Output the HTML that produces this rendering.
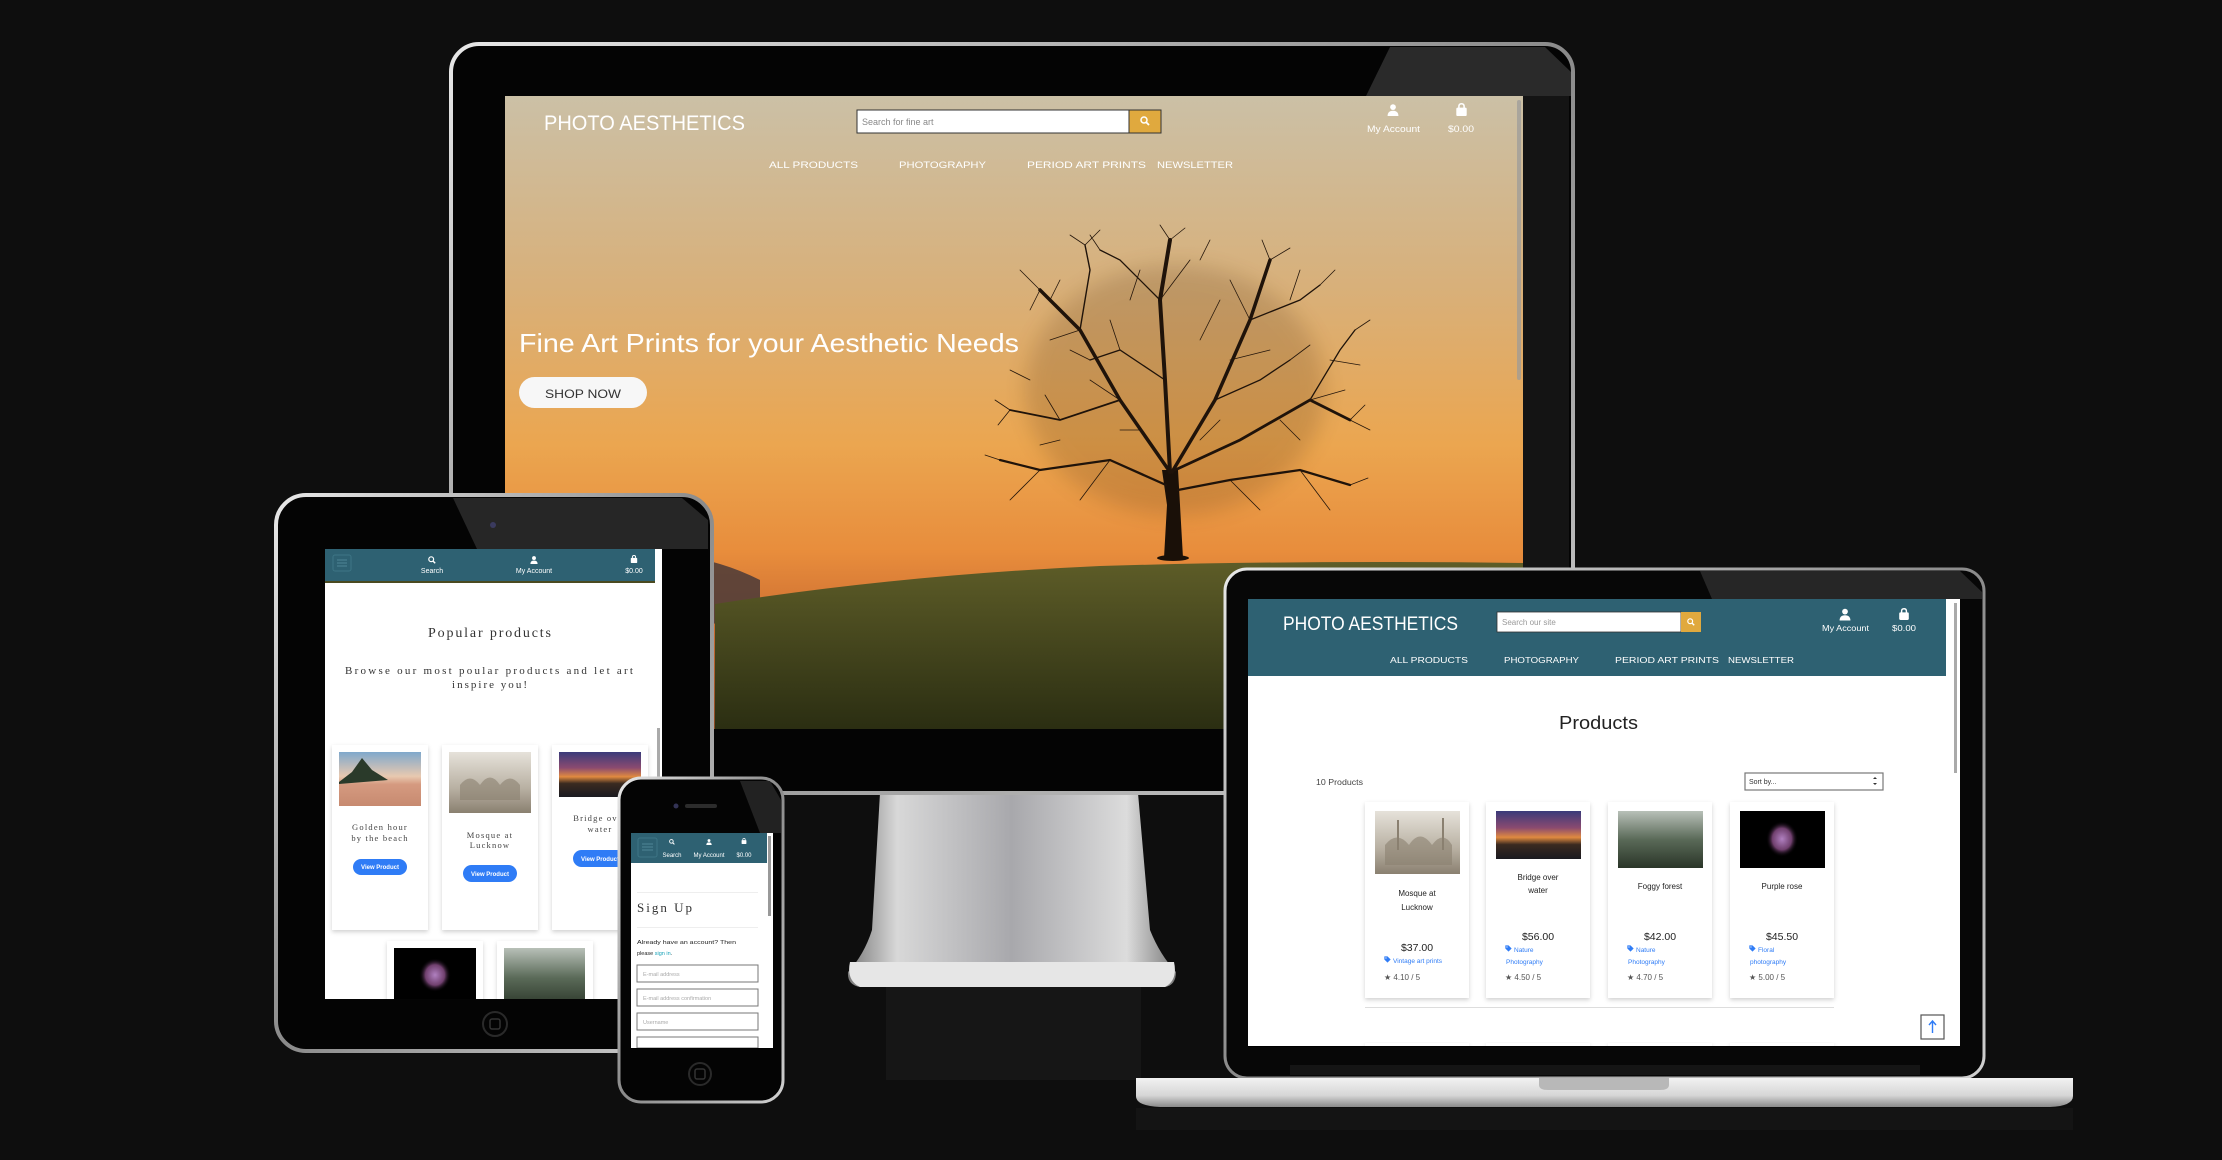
<!DOCTYPE html>
<html><head><meta charset="utf-8"><style>html,body{margin:0;padding:0;background:#0e0e0e;overflow:hidden}svg{display:block}</style></head>
<body>
<svg width="2222" height="1160" viewBox="0 0 2222 1160" xmlns="http://www.w3.org/2000/svg" font-family="Liberation Sans, sans-serif">
<defs>
<linearGradient id="sky" x1="0" y1="96" x2="0" y2="729" gradientUnits="userSpaceOnUse">
<stop offset="0" stop-color="#cbc0a6"/><stop offset="0.3" stop-color="#d8b07a"/><stop offset="0.55" stop-color="#eba650"/><stop offset="0.72" stop-color="#e88d3c"/><stop offset="0.85" stop-color="#c96a30"/><stop offset="1" stop-color="#8a4a25"/></linearGradient>
<linearGradient id="hill" x1="0" y1="560" x2="0" y2="729" gradientUnits="userSpaceOnUse"><stop offset="0" stop-color="#5e5d28"/><stop offset="1" stop-color="#2b2e12"/></linearGradient>
<linearGradient id="rim" x1="0" y1="0" x2="1" y2="1"><stop offset="0" stop-color="#e8e8e8"/><stop offset="0.5" stop-color="#8a8a8a"/><stop offset="1" stop-color="#d0d0d0"/></linearGradient>
<linearGradient id="stand" x1="0" y1="0" x2="1" y2="0"><stop offset="0" stop-color="#7a7a7a"/><stop offset="0.15" stop-color="#d8d8d8"/><stop offset="0.5" stop-color="#a8a8ac"/><stop offset="0.85" stop-color="#dcdcdc"/><stop offset="1" stop-color="#7a7a7a"/></linearGradient>
<linearGradient id="base" x1="0" y1="0" x2="0" y2="1"><stop offset="0" stop-color="#f2f2f2"/><stop offset="0.6" stop-color="#d6d6d6"/><stop offset="1" stop-color="#8a8a8a"/></linearGradient>
<linearGradient id="beach" x1="0" y1="0" x2="0" y2="1"><stop offset="0" stop-color="#7fa8cc"/><stop offset="0.45" stop-color="#e8c9b0"/><stop offset="0.6" stop-color="#d59a80"/><stop offset="1" stop-color="#c78a70"/></linearGradient>
<linearGradient id="bridge" x1="0" y1="0" x2="0" y2="1"><stop offset="0" stop-color="#3a3a7a"/><stop offset="0.35" stop-color="#8a4a70"/><stop offset="0.55" stop-color="#e08a40"/><stop offset="0.7" stop-color="#3a2a20"/><stop offset="1" stop-color="#1a1a20"/></linearGradient>
<linearGradient id="forest" x1="0" y1="0" x2="0" y2="1"><stop offset="0" stop-color="#b8c0b8"/><stop offset="0.5" stop-color="#5a6a58"/><stop offset="1" stop-color="#2a3528"/></linearGradient>
<linearGradient id="mosque" x1="0" y1="0" x2="0" y2="1"><stop offset="0" stop-color="#e6e2da"/><stop offset="0.6" stop-color="#b8b0a2"/><stop offset="1" stop-color="#8a8070"/></linearGradient>
<radialGradient id="rose" cx="0.5" cy="0.5" r="0.5"><stop offset="0" stop-color="#b080c0"/><stop offset="0.6" stop-color="#70406e"/><stop offset="1" stop-color="#000" stop-opacity="0"/></radialGradient>
<filter id="blur"><feGaussianBlur stdDeviation="10"/></filter>
<filter id="sh" x="-20%" y="-20%" width="140%" height="140%"><feDropShadow dx="0" dy="2" stdDeviation="2" flood-color="#000" flood-opacity="0.18"/></filter>
<clipPath id="tabclip"><rect x="325" y="549" width="337" height="450"/></clipPath>
<symbol id="mag" viewBox="0 0 10 10"><circle cx="4" cy="4" r="3" fill="none" stroke="#fff" stroke-width="1.5"/><line x1="6.2" y1="6.2" x2="9" y2="9" stroke="#fff" stroke-width="1.8"/></symbol>
<symbol id="user" viewBox="0 0 10 10"><circle cx="5" cy="2.6" r="2.4" fill="#fff"/><path d="M0.5 10 Q0.5 5.6 5 5.6 Q9.5 5.6 9.5 10 Z" fill="#fff"/></symbol>
<symbol id="bag" viewBox="0 0 10 10"><path d="M3 4 V2.6 Q3 0.6 5 0.6 Q7 0.6 7 2.6 V4" fill="none" stroke="#fff" stroke-width="1.2"/><rect x="1" y="3.6" width="8" height="6.4" rx="1" fill="#fff"/></symbol>
<symbol id="tag" viewBox="0 0 10 10"><path d="M0.5 0.5 H5 L9.5 5 L5 9.5 L0.5 5 Z" fill="#2f7cf6"/><circle cx="2.8" cy="2.8" r="0.9" fill="#fff"/></symbol>
</defs>

<rect width="2222" height="1160" fill="#0e0e0e"/>

<!-- ============ MONITOR ============ -->
<rect x="886" y="985" width="255" height="95" fill="#161616"/>
<path d="M880 793 L1138 793 L1150 930 Q1160 955 1176 972 Q1176 985 1165 987 L860 987 Q847 985 848 972 Q864 955 872 930 Z" fill="url(#stand)"/>
<path d="M850 962 L1174 962 Q1178 980 1165 987 L860 987 Q846 980 850 962 Z" fill="#e6e6e6"/>
<rect x="451" y="44" width="1122" height="749" rx="28" fill="#040404" stroke="url(#rim)" stroke-width="4"/>
<polygon points="1390,47 1545,47 1571,72 1571,96 1366,96" fill="#2a2a2a"/>
<rect x="1523" y="96" width="46" height="634" fill="#141414"/>
<rect x="505" y="96" width="1018" height="633" fill="url(#sky)"/>
<path d="M505 575 Q560 550 600 552 Q640 540 680 556 Q720 560 760 580 L760 620 L505 640 Z" fill="#4a3a38" opacity="0.85"/>
<path d="M715 604 Q900 575 1100 566 Q1300 560 1523 563 L1523 729 L715 729 Z" fill="url(#hill)"/>
<!-- tree -->
<ellipse cx="1175" cy="390" rx="150" ry="125" fill="#4a2a10" opacity="0.18" filter="url(#blur)"/>
<path d="M1164 558 L1167 505 L1162 470 L1178 470 L1180 505 L1183 558 Z" fill="#1a1008"/>
<ellipse cx="1173" cy="558" rx="16" ry="3" fill="#1a1008"/>
<g stroke="#1f130a" stroke-linecap="round" fill="none">
<path d="M1170 472 L1120 400 L1080 330 L1040 290" stroke-width="3.5"/>
<path d="M1120 400 L1060 420 L1010 410" stroke-width="1.8"/>
<path d="M1080 330 L1090 270 L1085 245" stroke-width="1.4"/>
<path d="M1170 472 L1165 380 L1160 300 L1170 240" stroke-width="4"/>
<path d="M1160 300 L1120 260 L1100 250" stroke-width="1.3"/>
<path d="M1172 472 L1215 400 L1250 320 L1270 260" stroke-width="3.5"/>
<path d="M1250 320 L1300 300 L1320 285" stroke-width="1.3"/>
<path d="M1175 470 L1240 440 L1310 400 L1350 420" stroke-width="2.8"/>
<path d="M1310 400 L1340 350 L1355 330" stroke-width="1.3"/>
<path d="M1166 485 L1110 460 L1040 470 L1000 460" stroke-width="2.3"/>
<path d="M1178 490 L1230 480 L1300 470 L1350 485" stroke-width="2.3"/>
<path d="M1165 380 L1120 350 L1090 360" stroke-width="1.3"/>
<path d="M1215 400 L1260 380 L1290 360" stroke-width="1.3"/>
</g>
<g stroke="#24160b" stroke-linecap="round" fill="none" stroke-width="0.8">
<path d="M1040 470 L1010 500 M1300 470 L1330 510 M1120 400 L1090 380 M1250 320 L1230 280 M1160 300 L1190 260 M1080 330 L1050 340 M1310 400 L1345 390 M1110 460 L1080 500 M1230 480 L1260 510"/>
<path d="M1040 290 L1020 270 M1040 290 L1030 310 M1085 245 L1070 235 M1085 245 L1100 230 M1170 240 L1160 225 M1170 240 L1185 228 M1100 250 L1090 235 M1270 260 L1262 240 M1270 260 L1290 248 M1320 285 L1335 270 M1355 330 L1370 320 M1350 420 L1370 430 M1350 420 L1365 405 M1010 410 L995 400 M1010 410 L998 425 M1000 460 L985 455 M1350 485 L1368 478 M1290 360 L1310 345 M1090 360 L1070 350"/>
<path d="M1060 420 L1045 395 M1120 350 L1110 320 M1130 300 L1140 270 M1200 340 L1220 300 M1230 360 L1270 350 M1280 420 L1300 440 M1060 440 L1040 445 M1140 430 L1120 430 M1200 440 L1220 420 M1330 360 L1360 365 M1030 380 L1010 370 M1290 300 L1300 270 M1200 260 L1210 240 M1050 300 L1060 280"/>
</g>
<text x="544" y="130" font-size="21" fill="#fff" textLength="201" lengthAdjust="spacingAndGlyphs">PHOTO AESTHETICS</text>
<rect x="857" y="110" width="272" height="23" fill="#fff" stroke="#333" stroke-width="1"/>
<rect x="1129" y="110" width="32" height="23" fill="#e0a93e" stroke="#333" stroke-width="1"/>
<use href="#mag" x="1140" y="116" width="10" height="10"/>
<text x="862" y="125" font-size="9" fill="#888">Search for fine art</text>
<use href="#user" x="1387" y="104" width="12" height="12"/>
<text x="1367" y="132" font-size="9" fill="#fff" textLength="53" lengthAdjust="spacingAndGlyphs">My Account</text>
<use href="#bag" x="1455" y="103" width="13" height="13"/>
<text x="1448" y="132" font-size="9" fill="#fff" textLength="26" lengthAdjust="spacingAndGlyphs">$0.00</text>
<g font-size="9.5" fill="#fff">
<text x="769" y="168" textLength="89" lengthAdjust="spacingAndGlyphs">ALL PRODUCTS</text>
<text x="899" y="168" textLength="87" lengthAdjust="spacingAndGlyphs">PHOTOGRAPHY</text>
<text x="1027" y="168" textLength="119" lengthAdjust="spacingAndGlyphs">PERIOD ART PRINTS</text>
<text x="1157" y="168" textLength="76" lengthAdjust="spacingAndGlyphs">NEWSLETTER</text>
</g>
<text x="519" y="352" font-size="26" fill="#fff" textLength="500" lengthAdjust="spacingAndGlyphs">Fine Art Prints for your Aesthetic Needs</text>
<rect x="519" y="377" width="128" height="31" rx="15.5" fill="#f7f7f7"/>
<text x="545" y="398" font-size="12" fill="#333" textLength="76" lengthAdjust="spacingAndGlyphs">SHOP NOW</text>
<rect x="1517" y="100" width="4" height="280" rx="2" fill="#9a9a9a" opacity="0.7"/>

<!-- ============ TABLET ============ -->
<rect x="276" y="495" width="436" height="556" rx="30" fill="#040404" stroke="url(#rim)" stroke-width="4"/>
<polygon points="453,498 682,498 708,520 708,549 477,549" fill="#262626"/>
<circle cx="493" cy="525" r="3" fill="#3a3a5e"/>
<rect x="325" y="549" width="337" height="450" fill="#fff"/>
<rect x="325" y="549" width="330" height="33" fill="#2e6172"/>
<rect x="325" y="581" width="330" height="2" fill="#4a4a20"/>
<rect x="333" y="555" width="18" height="16" rx="2" fill="none" stroke="#3d7585"/>
<path d="M337 560 H347 M337 563 H347 M337 566 H347" stroke="#4d8595" stroke-width="1"/>
<use href="#mag" x="428" y="556" width="8" height="8"/>
<text x="432" y="573" font-size="7" fill="#fff" text-anchor="middle">Search</text>
<use href="#user" x="530" y="556" width="8" height="8"/>
<text x="534" y="573" font-size="7" fill="#fff" text-anchor="middle">My Account</text>
<use href="#bag" x="630" y="555" width="8" height="8"/>
<text x="634" y="573" font-size="7" fill="#fff" text-anchor="middle">$0.00</text>
<rect x="657" y="728" width="3" height="90" fill="#aaa"/>
<text x="428" y="637" font-family="Liberation Serif, serif" font-size="14" fill="#333" textLength="123" lengthAdjust="spacing">Popular products</text>
<text x="345" y="674" font-family="Liberation Serif, serif" font-size="11" fill="#333" textLength="288" lengthAdjust="spacing">Browse our most poular products and let art</text>
<text x="452" y="688" font-family="Liberation Serif, serif" font-size="11" fill="#333" textLength="75" lengthAdjust="spacing">inspire you!</text>
<g clip-path="url(#tabclip)">
<g filter="url(#sh)" fill="#fff">
<rect x="332" y="745" width="96" height="185"/><rect x="442" y="745" width="96" height="185"/><rect x="552" y="745" width="96" height="185"/>
<rect x="387" y="941" width="96" height="70"/><rect x="497" y="941" width="96" height="70"/>
</g>
<rect x="394" y="948" width="82" height="60" fill="#000"/>
<ellipse cx="435" cy="975" rx="16" ry="17" fill="url(#rose)"/>
<rect x="504" y="948" width="81" height="60" fill="url(#forest)"/>
</g>
<rect x="339" y="752" width="82" height="54" fill="url(#beach)"/>
<path d="M339 782 L352 772 L362 758 L372 770 L388 780 L339 784 Z" fill="#2a3a2a"/>
<rect x="449" y="752" width="82" height="61" fill="url(#mosque)"/>
<path d="M460 800 V785 Q470 772 480 785 Q490 770 500 785 Q510 772 520 785 V800 Z" fill="#8a8070" opacity="0.6"/>
<rect x="559" y="752" width="82" height="45" fill="url(#bridge)"/>
<g font-family="Liberation Serif, serif" font-size="8.5" fill="#444" text-anchor="middle" letter-spacing="1.2">
<text x="380" y="830">Golden hour</text><text x="380" y="841">by the beach</text>
<text x="490" y="838">Mosque at</text><text x="490" y="848">Lucknow</text>
<text x="600" y="821">Bridge over</text><text x="600" y="832">water</text>
</g>
<g fill="#2f7cf6"><rect x="353" y="859" width="54" height="16" rx="8"/><rect x="463" y="865" width="54" height="17" rx="8.5"/><rect x="573" y="850" width="54" height="17" rx="8.5"/></g>
<g font-size="6" fill="#fff" text-anchor="middle" font-weight="bold"><text x="380" y="869">View Product</text><text x="490" y="876">View Product</text><text x="600" y="861">View Product</text></g>
<circle cx="495" cy="1024" r="12" fill="none" stroke="#2a2a2a" stroke-width="2"/>
<rect x="490" y="1019" width="10" height="10" rx="2" fill="none" stroke="#333" stroke-width="1.5"/>

<!-- ============ PHONE ============ -->
<rect x="619" y="778" width="164" height="324" rx="22" fill="#040404" stroke="url(#rim)" stroke-width="3"/>
<polygon points="740,781 770,781 781,800 781,833 760,833" fill="#222"/>
<circle cx="676" cy="806" r="2.5" fill="#333355"/>
<rect x="685" y="804" width="32" height="4" rx="2" fill="#2c2c2c"/>
<rect x="631" y="833" width="142" height="215" fill="#fff"/>
<rect x="631" y="833" width="136" height="30" fill="#2e6172"/>
<rect x="638" y="838" width="19" height="19" rx="2" fill="none" stroke="#3d7585"/>
<path d="M642 844 H653 M642 847 H653 M642 850 H653" stroke="#4d8595"/>
<use href="#mag" x="669" y="839" width="6" height="6"/>
<text x="672" y="857" font-size="6" fill="#fff" text-anchor="middle">Search</text>
<use href="#user" x="706" y="839" width="6" height="6"/>
<text x="709" y="857" font-size="6" fill="#fff" text-anchor="middle">My Account</text>
<use href="#bag" x="741" y="838" width="6" height="6"/>
<text x="744" y="857" font-size="6" fill="#fff" text-anchor="middle">$0.00</text>
<rect x="768" y="836" width="3" height="80" fill="#999"/>
<rect x="637" y="892" width="121" height="1" fill="#eee"/>
<text x="637" y="912" font-family="Liberation Serif, serif" font-size="13" fill="#333" textLength="55" lengthAdjust="spacing">Sign Up</text>
<rect x="637" y="927" width="121" height="1" fill="#eee"/>
<text x="637" y="944" font-size="5.5" fill="#222" textLength="99" lengthAdjust="spacingAndGlyphs">Already have an account? Then</text>
<text x="637" y="955" font-size="5.5" fill="#222">please <tspan fill="#17a2b8">sign in</tspan>.</text>
<g fill="#fff" stroke="#777" stroke-width="1">
<rect x="637" y="965" width="121" height="17"/><rect x="637" y="989" width="121" height="17"/><rect x="637" y="1013" width="121" height="17"/><rect x="637" y="1037" width="121" height="11"/>
</g>
<g font-size="5.5" fill="#aaa"><text x="643" y="976">E-mail address</text><text x="643" y="1000">E-mail address confirmation</text><text x="643" y="1024">Username</text></g>
<rect x="631" y="1048" width="142" height="1" fill="#000"/>
<circle cx="700" cy="1074" r="11" fill="none" stroke="#2a2a2a" stroke-width="2"/>
<rect x="695" y="1069" width="10" height="10" rx="2" fill="none" stroke="#333" stroke-width="1.5"/>

<!-- ============ LAPTOP ============ -->
<rect x="1225" y="569" width="759" height="509" rx="22" fill="#070707" stroke="url(#rim)" stroke-width="3"/>
<polygon points="1700,571 1960,571 1982,592 1982,599 1712,599" fill="#262626"/>
<rect x="1248" y="599" width="712" height="447" fill="#fff"/>
<rect x="1248" y="599" width="698" height="77" fill="#2e6172"/>
<text x="1283" y="630" font-size="19" fill="#fff" textLength="175" lengthAdjust="spacingAndGlyphs">PHOTO AESTHETICS</text>
<rect x="1497" y="612" width="184" height="20" fill="#fff" stroke="#333" stroke-width="0.8"/>
<rect x="1681" y="612" width="20" height="20" fill="#e0a93e"/>
<use href="#mag" x="1687" y="618" width="8" height="8"/>
<text x="1502" y="625" font-size="8" fill="#999">Search our site</text>
<use href="#user" x="1839" y="608" width="12" height="13"/>
<text x="1822" y="631" font-size="8" fill="#fff" textLength="47" lengthAdjust="spacingAndGlyphs">My Account</text>
<use href="#bag" x="1898" y="607" width="12" height="14"/>
<text x="1892" y="631" font-size="8" fill="#fff" textLength="24" lengthAdjust="spacingAndGlyphs">$0.00</text>
<g font-size="8" fill="#fff">
<text x="1390" y="663" textLength="78" lengthAdjust="spacingAndGlyphs">ALL PRODUCTS</text>
<text x="1504" y="663" textLength="75" lengthAdjust="spacingAndGlyphs">PHOTOGRAPHY</text>
<text x="1615" y="663" textLength="104" lengthAdjust="spacingAndGlyphs">PERIOD ART PRINTS</text>
<text x="1728" y="663" textLength="66" lengthAdjust="spacingAndGlyphs">NEWSLETTER</text>
</g>
<rect x="1954" y="603" width="3" height="170" fill="#aaa"/>
<text x="1559" y="729" font-size="18" fill="#222" textLength="79" lengthAdjust="spacingAndGlyphs">Products</text>
<text x="1316" y="785" font-size="8" fill="#444" textLength="47" lengthAdjust="spacingAndGlyphs">10 Products</text>
<rect x="1745" y="773" width="138" height="17" fill="#fff" stroke="#777" stroke-width="1.2"/>
<text x="1749" y="784" font-size="7" fill="#333">Sort by...</text>
<path d="M1873 779 l2 -2 l2 2 Z M1873 783 l2 2 l2 -2 Z" fill="#333"/>
<g filter="url(#sh)" fill="#fff">
<rect x="1365" y="802" width="104" height="196"/><rect x="1486" y="802" width="104" height="196"/><rect x="1608" y="802" width="104" height="196"/><rect x="1730" y="802" width="104" height="196"/>
</g>
<rect x="1375" y="811" width="85" height="63" fill="url(#mosque)"/>
<path d="M1385 865 V845 Q1397 830 1409 845 Q1420 828 1432 845 Q1443 830 1452 845 V865 Z" fill="#8a8070" opacity="0.6"/>
<rect x="1397" y="820" width="2" height="30" fill="#8a8070"/><rect x="1442" y="818" width="2" height="32" fill="#8a8070"/>
<rect x="1496" y="811" width="85" height="48" fill="url(#bridge)"/>
<rect x="1618" y="811" width="85" height="57" fill="url(#forest)"/>
<rect x="1740" y="811" width="85" height="57" fill="#000"/>
<ellipse cx="1782" cy="839" rx="16" ry="18" fill="url(#rose)"/>
<g font-size="8" fill="#222" text-anchor="middle">
<text x="1417" y="896">Mosque at</text><text x="1417" y="910">Lucknow</text>
<text x="1538" y="880">Bridge over</text><text x="1538" y="893">water</text>
<text x="1660" y="889">Foggy forest</text>
<text x="1782" y="889">Purple rose</text>
</g>
<g font-size="10.5" fill="#222" text-anchor="middle">
<text x="1417" y="951">$37.00</text><text x="1538" y="940">$56.00</text><text x="1660" y="940">$42.00</text><text x="1782" y="940">$45.50</text>
</g>
<g font-size="6.5" fill="#2f7cf6">
<use href="#tag" x="1384" y="956" width="7" height="7"/><text x="1393" y="963">Vintage art prints</text>
<use href="#tag" x="1505" y="945" width="7" height="7"/><text x="1514" y="952">Nature</text><text x="1506" y="964">Photography</text>
<use href="#tag" x="1627" y="945" width="7" height="7"/><text x="1636" y="952">Nature</text><text x="1628" y="964">Photography</text>
<use href="#tag" x="1749" y="945" width="7" height="7"/><text x="1758" y="952">Floral</text><text x="1750" y="964">photography</text>
</g>
<g font-size="8" fill="#555">
<text x="1384" y="980">★ 4.10 / 5</text><text x="1505" y="980">★ 4.50 / 5</text><text x="1627" y="980">★ 4.70 / 5</text><text x="1749" y="980">★ 5.00 / 5</text>
</g>
<rect x="1365" y="1007" width="469" height="1" fill="#ddd"/>
<g fill="#fff" filter="url(#sh)"><rect x="1365" y="1043" width="104" height="3"/><rect x="1486" y="1043" width="104" height="3"/><rect x="1608" y="1043" width="104" height="3"/><rect x="1730" y="1043" width="104" height="3"/></g>
<rect x="1921" y="1015" width="23" height="24" fill="#fff" stroke="#555" stroke-width="1.2"/>
<path d="M1932.5 1033 V1021 M1929 1025 L1932.5 1021 L1936 1025" stroke="#2f7cf6" stroke-width="1.4" fill="none"/>
<rect x="1248" y="1046" width="712" height="1" fill="#000"/>
<rect x="1290" y="1065" width="630" height="10" fill="#151515"/>
<path d="M1136 1078 H2073 V1096 Q2073 1106 2050 1107 H1160 Q1136 1106 1136 1096 Z" fill="url(#base)"/>
<path d="M1539 1078 H1669 V1085 Q1669 1090 1660 1090 H1548 Q1539 1090 1539 1085 Z" fill="#b8b8b8"/>
<rect x="1136" y="1108" width="937" height="22" fill="#1a1a1a" opacity="0.5"/>
</svg>
</body></html>
